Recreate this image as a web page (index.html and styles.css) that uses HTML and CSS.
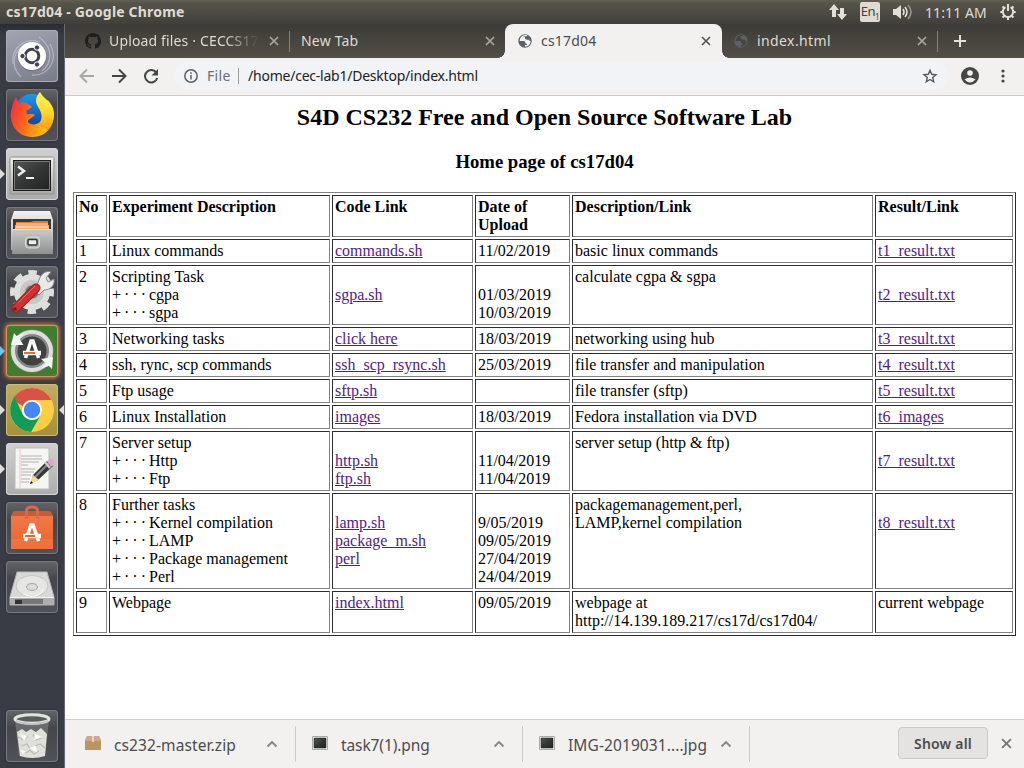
FILE: index.html
```html
<!DOCTYPE html>
<html lang="en">
<head>
<meta charset="utf-8">
<title>cs17d04</title>
<link rel="stylesheet" href="styles.css">
</head>
<body>
<svg class="defs" width="0" height="0">
  <defs>
    <linearGradient id="silver" x2="0" y2="1"><stop offset="0" stop-color="#f1f1ef"/><stop offset="1" stop-color="#a8a9a8"/></linearGradient>
    <linearGradient id="drawer" x2="0" y2="1"><stop offset="0" stop-color="#c9cac9"/><stop offset="1" stop-color="#8f9191"/></linearGradient>
    <linearGradient id="orange" x2="0" y2="1"><stop offset="0" stop-color="#f27c4c"/><stop offset="1" stop-color="#ea632d"/></linearGradient>
    <linearGradient id="fox" x1="0" y1="0" x2="1" y2=".35"><stop offset="0" stop-color="#f0244d"/><stop offset=".4" stop-color="#ff5a20"/><stop offset=".75" stop-color="#ff980e"/><stop offset="1" stop-color="#ffc01a"/></linearGradient>
    <linearGradient id="flame" x2="0" y2="1"><stop offset="0" stop-color="#fff45a"/><stop offset=".5" stop-color="#ffdc2a"/><stop offset="1" stop-color="#ff980e"/></linearGradient>
    <linearGradient id="screen" x2="1" y2="1"><stop offset="0" stop-color="#555"/><stop offset=".5" stop-color="#343636"/><stop offset="1" stop-color="#222"/></linearGradient>
    <linearGradient id="globeblue" x2="0" y2="1"><stop offset="0" stop-color="#179bf0"/><stop offset="1" stop-color="#173b9a"/></linearGradient>
    <symbol id="globe" viewBox="0 0 24 24"><path d="M12 2C6.480 2 2 6.480 2 12s4.480 10 10 10 10-4.480 10-10S17.520 2 12 2z" fill="currentColor"/><path d="M4 12h5.500c2 0 3 1 3 2.500 0 1.500 1 1.500 1.500 1.500h1v2h-3v2.500c5 0 8.500-4 8.500-8.500h-2v-2h-3c-2 0-3.500-1-3.500-2.500v-1h-2V5.500l2-.5h3l.5-1.500c-5-1.500-9.500 1-11 5.500z"/></symbol>
    <symbol id="close" viewBox="0 0 10 10"><path d="M1 1l8 8M9 1l-8 8" stroke="currentColor" stroke-width="1.700" fill="none"/></symbol>
    <symbol id="up" viewBox="0 0 12 8"><path d="M1.500 6.500L6 2l4.500 4.500" stroke="#858583" stroke-width="1.800" fill="none"/></symbol>
    <symbol id="image" viewBox="0 0 16 14"><path d="M.5.500h15v13H.5z" fill="#fff" stroke="#aaa"/><path d="M2 2h12v10H2z" fill="url(#screen)" stroke="#222" stroke-width=".6"/></symbol>
  </defs>
</svg>
<div class="desktop">
  <header class="menubar">
    <span class="window-title">cs17d04 - Google Chrome</span>
    <div class="indicators">
      <svg class="net" width="18" height="17" viewBox="0 0 18 17"><path d="M5 0L0 6h3v7h4V6h3zM13 16l5-6h-3V4h-4v6H8z" fill="#e2dfd6"/></svg>
      <span class="lang">En<sub>1</sub></span>
      <svg class="sound" width="20" height="16" viewBox="0 0 20 16"><path d="M0 5h3l5-4v14l-5-4H0z" fill="#e2dfd6"/><path d="M10 5q2 3 0 6M12 3q4 5 0 10" stroke="#e2dfd6" stroke-width="1.600" fill="none"/><path d="M15 1q6 7 0 14" stroke="#96938a" stroke-width="1.600" fill="none"/></svg>
      <time class="clock">11:11 AM</time>
      <svg class="power" width="16" height="16" viewBox="0 0 16 16"><path d="M5.500 3.200A5.200 5.200 0 1 0 10.500 3.200" stroke="#e2dfd6" stroke-width="2" fill="none"/><path d="M8 0v7M.3 8h2.500M13.200 8h2.500M2.500 2.500l1.500 1.500M13.500 2.500L12 4M2.500 13.500L4.300 11.700M13.500 13.500l-1.800-1.800M8 13v3" stroke="#e2dfd6" stroke-width="2"/></svg>
    </div>
  </header>
  <div class="workspace">
    <nav class="launcher">
      <div class="tile dash"><svg viewBox="0 0 52 52"><path d="M7 34C5 18 18 7 34 12M15 47C2 34 9 17 22 15M44 14c9 17-2 32-18 31M33 7c16 12 12 27 3 34" stroke="#c5c7d0" stroke-width="1.300" opacity=".65" fill="none"/><circle cx="26" cy="27" r="14.500" fill="#777a85"/><circle cx="26" cy="26" r="14" fill="#fff"/><circle cx="26" cy="26" r="6.800" fill="none" stroke="#41444e" stroke-width="3"/><g fill="#41444e" stroke="#fff"><circle cx="16.500" cy="26" r="2.700"/><circle cx="31" cy="17.500" r="2.700"/><circle cx="31" cy="34.500" r="2.700"/></g></svg></div>
      <div class="tile"><svg viewBox="0 0 52 52"><circle cx="26" cy="22" r="17" fill="url(#globeblue)"/><path d="M10 8l3 6c3-1 6-1 8 0l5 4-6 4 1 3h6l2 1-5 4c-2 1-3 2-1 4 4 3 11 1 13-4 2-4 1-9-2-13l8-6c6 8 7 17 4 24-4 9-11 13-20 13C11 48 1 33 6 18c1-4 2-7 4-10z" fill="url(#fox)"/><path d="M34 3c-4 4-5 9-3 13 4 7 7 11 2 20l9 5c6-6 8-17 4-24-2-5-9-8-12-14z" fill="url(#flame)"/></svg></div>
      <div class="tile light"><svg viewBox="0 0 52 52"><rect x="4" y="9" width="44" height="37" rx="1.500" fill="url(#silver)" stroke="#8e8f8d"/><path d="M7 12h38v31H7z" fill="#1d1f1f"/><path d="M8.500 13.500h35v28h-35z" fill="url(#screen)" stroke="#787979"/><path d="M12 18.500l6 4.500-6 4.500" fill="none" stroke="#eee" stroke-width="2.500"/><path d="M20 30h8" stroke="#eee" stroke-width="2"/></svg><i class="arrow"></i></div>
      <div class="tile"><svg viewBox="0 0 52 52"><path d="M8 4h36l3 9v30H5V13z" fill="url(#silver)"/><path d="M7 12h38v14H7z" fill="#393b3c"/><path d="M10 15h15l2-1h15v12H10z" fill="#e8772a"/><path d="M9 18h34v5H9z" fill="#ffae61"/><path d="M10 17h32M10 20h32" stroke="#f5ede5"/><path d="M7 22h38l2 25H6z" fill="url(#drawer)"/><path d="M7 22.500h38" stroke="#e4e5e4"/><rect x="19.500" y="30" width="14" height="11" rx="3" fill="#b5b6b5" stroke="#ddd"/><rect x="22" y="32.500" width="9" height="5.500" rx="1" fill="#eee" stroke="#333" stroke-width="1.500"/></svg></div>
      <div class="tile"><svg viewBox="0 0 52 52"><circle cx="26" cy="26" r="18.500" fill="none" stroke="#dededd" stroke-width="7" stroke-dasharray="8 6.530" stroke-dashoffset="4"/><circle cx="26" cy="26" r="14" fill="none" stroke="#dededd" stroke-width="8"/><circle cx="26" cy="26" r="12" fill="#c6c7c6"/><circle cx="26" cy="26" r="7" fill="#717476" stroke="#b0b1b0"/><path d="M29 25l4-11c2-7 8-10 12-8l-5 6 2 4 6-3c1 7-4 11-10 11l-5 5z" fill="#e9e9e7" stroke="#888"/><path d="M10 42l20-20" stroke="#98191b" stroke-width="9" stroke-linecap="round"/><path d="M10 42l20-20" stroke="#d52f2f" stroke-width="7" stroke-linecap="round"/><path d="M12 37l17-17" stroke="#e76864"/><circle cx="9" cy="43" r="1.800" fill="#761a1a"/></svg></div>
      <div class="tile updater"><svg viewBox="0 0 52 52"><circle cx="26" cy="26" r="18" fill="#3f4241" stroke="#858885" stroke-width="7"/><circle cx="26" cy="26" r="19" fill="none" stroke="#dedfdb" stroke-width="4"/><path d="M5 20L8 8l2.500 3 7-2-4 5 4 6z" fill="#f5f5f2"/><path d="M47 32l-1 12-3-3-7 2 4-5-5-4z" fill="#f5f5f2"/><path d="M19.500 33l5.500-17h2l5.500 17" fill="none" stroke="#fff" stroke-width="3.500"/><path d="M17 28h18" stroke="#fff" stroke-width="4.500"/><path d="M18 28h11" stroke="#f36a30" stroke-width="2"/></svg><i class="arrow blue"></i></div>
      <div class="tile chrome"><svg viewBox="0 0 52 52"><circle cx="26" cy="26" r="22" fill="#ffcd43"/><path d="M6.500 15.500A22 22 0 0 1 45.500 16H26a10 10 0 0 0-9.500 6z" fill="#db5148"/><path d="M8.500 12.800A22 22 0 0 0 25 48l9.500-16.500c-4 7-14 5-17.500-.5z" fill="#109d5a"/><circle cx="26" cy="26" r="10" fill="#fff"/><circle cx="26" cy="26" r="8.200" fill="#4386f5"/></svg><i class="arrow"></i><i class="arrow right"></i></div>
      <div class="tile light"><svg viewBox="0 0 52 52"><path d="M9 5h34v41H9z" fill="#f5f5f4" stroke="#bbb"/><path d="M14 6v39" stroke="#f2c4c4"/><path d="M15 13h21M15 16h21M15 19h18M15 22h7M15 26h14M15 29h13M15 32h10M15 36h9M15 39h8" stroke="#b0b1b0"/><path d="M25 40l2-8L41 18l6 5-15 14z" fill="#373939"/><path d="M29 34l14-14" stroke="#888" stroke-width="2"/><path d="M41 18l3-2c3-1 5 3 3 6l-2 2z" fill="#e7a4cb"/><path d="M39 19l5 6" stroke="#ccc" stroke-width="2.500"/><path d="M24 41l3-9 6 5z" fill="#f3db87"/><path d="M24 41l1-3 2 2z" fill="#111"/></svg><i class="arrow"></i></div>
      <div class="tile"><svg viewBox="0 0 52 52"><path d="M8 9h36l3 5v33H5V14z" fill="url(#orange)"/><path d="M5 14h42L44 9H8z" fill="#cf5930"/><path d="M20.500 17V9q0-4 5.500-4t5.500 4v8" fill="none" stroke="#d66a49" stroke-width="3"/><path d="M5 37h42v10H5z" fill="#f47a44" opacity=".6"/><path d="M19.500 39l5.500-16h2l5.500 16" fill="none" stroke="#fff" stroke-width="3.500"/><path d="M17 34h18" stroke="#fff" stroke-width="4.500"/><path d="M19 34h10" stroke="#eb662f" stroke-width="2"/></svg></div>
      <div class="tile"><svg viewBox="0 0 52 52"><path d="M11 11h30l7 25v8H4v-8z" fill="#d9dad8" stroke="#b5b6b5"/><path d="M4 36.500h44V44H4z" fill="#aeafad"/><path d="M4 36.500h44" stroke="#f4f4f2"/><path d="M9 38.500h28V43H9z" fill="#333"/><path d="M16 38.500h21V43H16z" fill="#777"/><ellipse cx="26" cy="25" rx="16" ry="10.500" fill="#e6e6e4" stroke="#c3c4c2"/><ellipse cx="26" cy="26" rx="5.500" ry="3.500" fill="#dcdcda" stroke="#a5a6a5"/><path d="M37 28c-2 8-12 9-20 5" fill="none" stroke="#fff"/></svg></div>
      <div class="tile trash"><svg viewBox="0 0 52 52"><path d="M9 10l4 36q13 4 26 0l4-36z" fill="#8b8d8e" opacity=".5"/><path d="M11 22l5-3 4 3 5-3 5 3 5-4 6 6-2 22q-13 4-25 0z" fill="#e0e0db"/><path d="M12 27l6 3 4-4M27 24l3 6 6-2M15 36l6-2 3 5M29 36l5-2 5 4M20 43l4-3 4 4 5-3" stroke="#bcbbb6" fill="none" stroke-width="1.200"/><path d="M14 24l7 2-3 5zM29 24l7 3-8 3zM23 38l7-2 1 6zM14 40l5 1-2 3z" fill="#fbfbf8"/><ellipse cx="26" cy="9" rx="17" ry="4.300" fill="#5a5b5d" stroke="#e3e4df" stroke-width="3"/><path d="M10 11q16 6 32 0" fill="none" stroke="#c3c4c0" stroke-width="1.500"/></svg></div>
    </nav>
    <main class="browser">
      <div class="tabstrip">
        <div class="tab github"><svg class="favicon" viewBox="0 0 16 16"><path fill="#1d1e1d" d="M8 0C3.580 0 0 3.580 0 8c0 3.540 2.290 6.530 5.470 7.590.4.070.55-.17.55-.38 0-.19-.01-.82-.01-1.490-2.010.37-2.530-.49-2.690-.94-.09-.23-.48-.94-.82-1.130-.28-.15-.68-.52-.01-.53.63-.01 1.080.58 1.230.82.72 1.210 1.870.87 2.330.66.070-.52.28-.87.51-1.070-1.780-.2-3.640-.89-3.640-3.950 0-.87.31-1.590.82-2.150-.08-.2-.36-1.020.08-2.120 0 0 .67-.21 2.200.82a7.420 7.420 0 0 1 4 0c1.530-1.040 2.200-.82 2.200-.82.44 1.100.16 1.920.08 2.120.51.56.82 1.270.82 2.150 0 3.070-1.870 3.750-3.650 3.950.29.25.54.73.54 1.480 0 1.070-.01 1.930-.01 2.200 0 .21.15.46.55.38A8 8 0 0 0 16 8c0-4.420-3.580-8-8-8z"/></svg><span class="tab-title faded">Upload files · CECCS17</span><svg class="close"><use href="#close"/></svg></div>
        <div class="tab newtab"><span class="tab-title">New Tab</span><svg class="close"><use href="#close"/></svg></div>
        <div class="tab active"><svg class="favicon"><use href="#globe"/></svg><span class="tab-title">cs17d04</span><svg class="close"><use href="#close"/></svg></div>
        <div class="tab last"><svg class="favicon"><use href="#globe"/></svg><span class="tab-title">index.html</span><svg class="close"><use href="#close"/></svg></div>
        <svg class="plus" width="12" height="12" viewBox="0 0 12 12"><path d="M6 0v12M0 6h12" stroke="#e4e1d8" stroke-width="2"/></svg>
      </div>
      <div class="toolbar">
        <svg class="nav back" viewBox="0 0 16 16"><path d="M15 8H2M8 1.500L1.500 8 8 14.500"/></svg>
        <svg class="nav forward" viewBox="0 0 16 16"><path d="M1 8h13M8 1.500L14.500 8 8 14.500"/></svg>
        <svg class="nav reload" viewBox="0 0 16 16"><path d="M13.500 5A6.200 6.200 0 1 0 14.200 10"/><path d="M15 1v6.500H8.500z" class="solid"/></svg>
        <div class="omnibox">
          <svg class="info" viewBox="0 0 14 14"><circle cx="7" cy="7" r="6.200"/><path d="M7 6v4.500M7 3.300v1.600"/></svg>
          <span class="scheme">File</span><span class="url">/home/cec-lab1/Desktop/index.html</span>
          <svg class="star" viewBox="0 0 16 16"><path d="M8 2.300l1.700 4 4.300.4-3.300 2.800 1 4.300L8 11.500l-3.700 2.300 1-4.300L2 6.700l4.300-.4z"/></svg>
        </div>
        <svg class="profile" viewBox="0 0 18 18"><circle cx="9" cy="9" r="9" fill="#454746"/><circle cx="9" cy="6" r="2.800" fill="#f2f1f0"/><path d="M3.500 12.500q5.500-4 11 0-5.500 6-11 0z" fill="#f2f1f0"/></svg>
        <svg class="dots" viewBox="0 0 4 14"><g fill="#454746"><circle cx="2" cy="2" r="1.600"/><circle cx="2" cy="7" r="1.600"/><circle cx="2" cy="12" r="1.600"/></g></svg>
      </div>
      <section class="page">
        <h2>S4D CS232 Free and Open Source Software Lab</h2>
        <h3>Home page of cs17d04</h3>
        <table>
          <colgroup><col class="c1"><col class="c2"><col class="c3"><col class="c4"><col class="c5"><col class="c6"></colgroup>
          <tr><th>No</th><th>Experiment Description</th><th>Code Link</th><th>Date of<br>Upload</th><th>Description/Link</th><th>Result/Link</th></tr>
          <tr><td>1</td><td>Linux commands</td><td><a>commands.sh</a></td><td>11/02/2019</td><td>basic linux commands</td><td><a>t1_result.txt</a></td></tr>
          <tr><td>2</td><td>Scripting Task<br><span class="sub">+ · · · </span>cgpa<br><span class="sub">+ · · · </span>sgpa</td><td><br><a>sgpa.sh</a></td><td><br>01/03/2019<br>10/03/2019</td><td>calculate cgpa &amp; sgpa</td><td><br><a>t2_result.txt</a></td></tr>
          <tr><td>3</td><td>Networking tasks</td><td><a>click here</a></td><td>18/03/2019</td><td>networking using hub</td><td><a>t3_result.txt</a></td></tr>
          <tr><td>4</td><td>ssh, rync, scp commands</td><td><a>ssh_scp_rsync.sh</a></td><td>25/03/2019</td><td>file transfer and manipulation</td><td><a>t4_result.txt</a></td></tr>
          <tr><td>5</td><td>Ftp usage</td><td><a>sftp.sh</a></td><td></td><td>file transfer (sftp)</td><td><a>t5_result.txt</a></td></tr>
          <tr><td>6</td><td>Linux Installation</td><td><a>images</a></td><td>18/03/2019</td><td>Fedora installation via DVD</td><td><a>t6_images</a></td></tr>
          <tr><td>7</td><td>Server setup<br><span class="sub">+ · · · </span>Http<br><span class="sub">+ · · · </span>Ftp</td><td><br><a>http.sh</a><br><a>ftp.sh</a></td><td><br>11/04/2019<br>11/04/2019</td><td>server setup (http &amp; ftp)</td><td><br><a>t7_result.txt</a></td></tr>
          <tr><td>8</td><td>Further tasks<br><span class="sub">+ · · · </span>Kernel compilation<br><span class="sub">+ · · · </span>LAMP<br><span class="sub">+ · · · </span>Package management<br><span class="sub">+ · · · </span>Perl</td><td><br><a>lamp.sh</a><br><a>package_m.sh</a><br><a>perl</a></td><td><br>9/05/2019<br>09/05/2019<br>27/04/2019<br>24/04/2019</td><td>packagemanagement,perl,<br>LAMP,kernel compilation</td><td><br><a>t8_result.txt</a></td></tr>
          <tr><td>9</td><td>Webpage</td><td><a>index.html</a></td><td>09/05/2019</td><td>webpage at<br>http://14.139.189.217/cs17d/cs17d04/</td><td>current webpage</td></tr>
        </table>
      </section>
      <footer class="downloads">
        <div class="download first"><svg class="file" viewBox="0 0 16 14"><path d="M2 0h12l2 4v10H0V4z" fill="#c6a477"/><path d="M2 0h12l2 5H0z" fill="#cda98a"/><path d="M0 5h16v9H0z" fill="#b99563"/><path d="M7 0h2v6H7z" fill="#ead6bd"/></svg><span class="name zip">cs232-master.zip</span><svg class="up"><use href="#up"/></svg></div>
        <div class="download"><svg class="file"><use href="#image"/></svg><span class="name png">task7(1).png</span><svg class="up"><use href="#up"/></svg></div>
        <div class="download"><svg class="file"><use href="#image"/></svg><span class="name jpg">IMG-2019031....jpg</span><svg class="up"><use href="#up"/></svg></div>
        <button class="show-all">Show all</button>
        <svg class="close dismiss"><use href="#close"/></svg>
      </footer>
    </main>
  </div>
</div>
</body>
</html>
```
FILE: styles.css
```css
* { box-sizing: border-box; }
body { margin: 0; font-family: "Noto Sans", sans-serif; }
svg { flex: none; display: block; }
.defs { position: absolute; }
.desktop { width: 1024px; height: 768px; display: flex; flex-direction: column; overflow: hidden; }
.menubar { height: 24px; flex: none; display: flex; align-items: center; padding: 0 8px 0 6px; justify-content: space-between; background: linear-gradient(#625f52, #56534a 15%, #403f3a); color: #dfdbd2; }
.window-title { font-size: 14px; font-weight: 700; line-height: 24px; letter-spacing: .18px; white-space: nowrap; }
.indicators { display: flex; align-items: center; }
.net { margin-right: 13px; }
.lang { width: 20px; height: 20px; border-radius: 2px; background: #dfdbd2; color: #46443f; font-size: 13px; line-height: 19px; text-align: center; letter-spacing: -.5px; margin-right: 13px; white-space: nowrap; }
.lang sub { font-size: 8px; line-height: 0; }
.sound { margin-right: 12px; }
.clock { width: 62px; font-size: 14px; white-space: nowrap; letter-spacing: .1px; margin-right: 13px; }
.workspace { flex: 1; display: flex; min-height: 0; }
.launcher { width: 65px; flex: none; padding: 6px 0 6px 6px; display: flex; flex-direction: column; gap: 7px; background: linear-gradient(#292c32, #393c44 12px, #393c44); border-right: 1px solid #676a70; }
.tile { position: relative; width: 52px; height: 52px; flex: none; border-radius: 4px; background: linear-gradient(#636568, #44464b 35%, #505359); box-shadow: inset 0 0 0 1px #777a7f, 0 0 2px #202227; }
.tile svg { width: 52px; height: 52px; }
.dash { background: linear-gradient(160deg, #a3a6b2, #777b88); box-shadow: inset 0 0 0 1px #aaadb8; }
.light { background: linear-gradient(#d0d1d0, #acadab); box-shadow: inset 0 0 0 1px #d5d6d4; }
.updater { background: #3f7e31; box-shadow: inset 0 0 0 1px #e98b58, 0 0 4px 1px #ed8148; }
.chrome { background: linear-gradient(#c0ad64, #a69038); box-shadow: inset 0 0 0 1px #cdbb74; }
.trash { margin-top: auto; }
.arrow { position: absolute; left: -6px; top: 21px; border: 5px solid transparent; border-left-color: #ddd; border-right: 0; }
.arrow.blue { border-left-color: #6fc5ed; }
.arrow.right { left: 53px; border-left: 0; border-right: 5px solid #ddd; }
.browser { flex: 1; min-width: 0; display: flex; flex-direction: column; background: #fff; }
.tabstrip { height: 34px; flex: none; display: flex; align-items: center; background: linear-gradient(#3c3b37, #524f47); color: #dfdbd2; }
.tab { height: 34px; display: flex; align-items: center; font-size: 14px; position: relative; }
.favicon { width: 16px; height: 16px; margin-right: 8px; fill: #f2f1f0; }
.tab-title { flex: 1; white-space: nowrap; overflow: hidden; line-height: 22px; letter-spacing: .2px; }
.tab-title.faded { letter-spacing: .15px; -webkit-mask-image: linear-gradient(90deg, #000 77%, transparent 100%); }
.close { width: 10px; height: 10px; color: #aaa79f; }
.github { width: 225px; padding: 0 11px 0 20px; }
.github .close { margin-left: 10px; }
.newtab { width: 215px; padding: 0 10px 0 11px; }
.github::after, .last::after { content: ""; position: absolute; right: 0; top: 7px; height: 21px; width: 1px; background: #85827a; }
.active { width: 217px; padding: 0 11px 0 12px; border-radius: 8px 8px 0 0; background: #f2f1f0; color: #4c4c4c; }
.active::before, .active::after { content: ""; position: absolute; bottom: 0; width: 7px; height: 7px; }
.active::before { left: -7px; background: radial-gradient(circle at 0 0, transparent 6.5px, #f2f1f0 7px); }
.active::after { right: -7px; background: radial-gradient(circle at 100% 0, transparent 6.5px, #f2f1f0 7px); }
.active .favicon, .last .favicon { color: #5d6166; }
.active .close { color: #555; }
.last .favicon { fill: #45443f; }
.last { width: 216px; padding: 0 11px; }
.last .tab-title { letter-spacing: .4px; }
.plus { margin-left: 16px; }
.toolbar { height: 38px; flex: none; display: flex; align-items: center; background: #f2f1f0; border-bottom: 1px solid #cbcac8; padding: 0 19px 2px 14px; }
.nav { width: 16px; height: 16px; margin-right: 16px; fill: none; stroke: #454746; stroke-width: 2; }
.nav.back { stroke: #a8a8a6; }
.nav .solid { fill: #454746; stroke: none; }
.omnibox { width: 774px; margin-left: -1px; height: 28px; border-radius: 14px; background: #f1f3f6; padding: 0 10px; display: flex; align-items: center; font-size: 14px; white-space: nowrap; }
.info { width: 14px; height: 14px; fill: none; stroke: #5d6065; stroke-width: 1.5; margin: 0 9px 0 0; }
.scheme { width: 32px; color: #6b6e72; border-right: 1px solid #999c9f; line-height: 16px; letter-spacing: .3px; margin-right: 9px; }
.url { flex: 1; color: #222; letter-spacing: -.23px; }
.star { width: 16px; height: 16px; fill: none; stroke: #555a5e; stroke-width: 1.4; }
.profile { width: 18px; height: 18px; margin-left: 13px; }
.dots { width: 4px; height: 14px; margin-left: auto; }
.page { flex: 1; min-height: 0; padding: 8px 8px 0; font: 16px/18px "Liberation Serif", serif; color: #000; }
h2 { margin: 0; font-size: 24px; line-height: 27px; text-align: center; }
h3 { margin: 20px 0; font-size: 18.72px; line-height: 21px; text-align: center; }
table { width: 943px; table-layout: fixed; border-collapse: separate; border-spacing: 2px; border: 1px solid gray; border-right-color: #2c2c2c; border-bottom-color: #2c2c2c; }
th, td { padding: 2px; text-align: left; vertical-align: top; border: 1px solid gray; border-top-color: #2c2c2c; border-left-color: #2c2c2c; white-space: nowrap; }
.c1 { width: 31px; } .c2 { width: 221px; } .c3 { width: 141px; } .c4 { width: 95px; } .c5 { width: 301px; } .c6 { width: 138px; }
.sub { word-spacing: -1px; }
a { color: #551a8b; text-decoration: underline; }
.downloads { height: 49px; flex: none; display: flex; align-items: center; border-top: 1px solid #cbcecc; background: #f2f1f0; color: #4c4c4c; }
.download { width: 227px; height: 36px; display: flex; align-items: center; border-right: 1px solid #cbcac8; padding: 0 17px 0 16px; }
.download.first { width: 231px; padding-left: 20px; }
.file { width: 16px; height: 14px; margin: -2px 13px 0 0; }
.name { flex: 1; font-size: 15.5px; line-height: 24px; white-space: nowrap; padding-top: 1px; }
.zip, .jpg { letter-spacing: .1px; }
.png { letter-spacing: -.1px; }
.up { width: 12px; height: 8px; }
.show-all { width: 90px; height: 32px; margin: -2px 13px 0 auto; padding: 0; border: 1px solid #cbcac8; border-radius: 4px; background: #e4e3e1; color: #4c4c4c; font: 600 14px "Noto Sans", sans-serif; letter-spacing: .2px; }
.dismiss { width: 11px; height: 11px; margin: -2px 12px 0 0; color: #777; }
```
